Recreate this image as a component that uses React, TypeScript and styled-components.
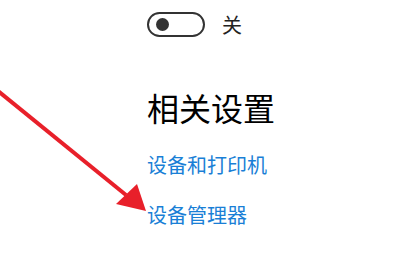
import React from 'react'
import styled, { createGlobalStyle } from 'styled-components'

const Global = createGlobalStyle`
  html, body {
    margin: 0;
    padding: 0;
    background: #fff;
  }
  body {
    font-family: "Noto Sans CJK SC", "Noto Sans", sans-serif;
  }
`

const Page = styled.div`
  position: relative;
  width: 420px;
  height: 280px;
  overflow: hidden;
  background: #fff;
  padding-left: 147px;
  box-sizing: border-box;
`

const ToggleRow = styled.div`
  display: flex;
  align-items: center;
  gap: 17px;
  padding-top: 12px;
  height: 25px;
`

const Switch = styled.div`
  width: 58px;
  height: 25px;
  box-sizing: border-box;
  border: 2px solid #333;
  border-radius: 13px;
  display: flex;
  align-items: center;
  padding-left: 7px;
`

const Knob = styled.div`
  width: 13px;
  height: 13px;
  border-radius: 50%;
  background: #333;
`

const ToggleLabel = styled.span`
  font-size: 20px;
  line-height: 25px;
  color: #222;
`

const Heading = styled.h2`
  margin: 52px 0 0;
  font-size: 32px;
  font-weight: 400;
  line-height: 36px;
  color: #000;
`

const LinkList = styled.div`
  display: flex;
  flex-direction: column;
  gap: 26px;
  margin-top: 28px;
`

const Link = styled.a`
  font-size: 20px;
  line-height: 24px;
  color: #1a7fd6;
  text-decoration: none;
`

const Arrow = styled.svg`
  position: absolute;
  left: 0;
  top: 0;
  pointer-events: none;
`

export default function App() {
  return (
    <>
      <Global />
      <Page>
        <ToggleRow>
          <Switch>
            <Knob />
          </Switch>
          <ToggleLabel>关</ToggleLabel>
        </ToggleRow>
        <Heading>相关设置</Heading>
        <LinkList>
          <Link href="#">设备和打印机</Link>
          <Link href="#">设备管理器</Link>
        </LinkList>
        <Arrow width="420" height="280" viewBox="0 0 420 280">
          <line x1="-2" y1="91" x2="126" y2="195" stroke="#e8202a" strokeWidth="4" />
          <polygon points="146,211 116,204 137,184" fill="#e8202a" />
        </Arrow>
      </Page>
    </>
  )
}
